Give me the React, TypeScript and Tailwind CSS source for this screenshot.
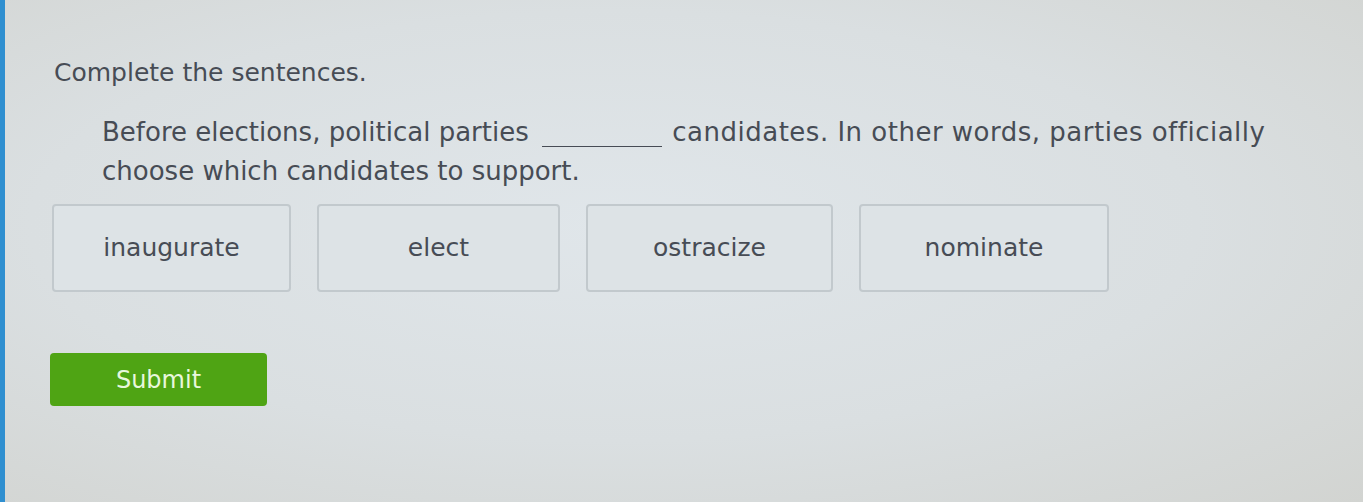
const choices = [
  { label: "inaugurate", w: "w-[239px]" },
  { label: "elect", w: "w-[243px]" },
  { label: "ostracize", w: "w-[247px]" },
  { label: "nominate", w: "w-[250px]" },
]

export default function App() {
  return (
    <div
      className="flex h-[502px] w-[1363px] bg-[radial-gradient(ellipse_at_45%_45%,#e0e6ea_0%,#dadfe1_55%,#d2d4d1_100%)] text-[#474c55]"
      style={{ fontFamily: '"DejaVu Sans", Verdana, sans-serif' }}
    >
      <div className="w-[5px] shrink-0 bg-[#2f8fd0]" />
      <div className="flex flex-col pl-[49px] pt-[58px]">
        <h1 className="text-[25px] leading-[30px] font-normal">Complete the sentences.</h1>

        <p className="mt-[25px] w-[1280px] pl-[48px] text-[26px] leading-[39px]">
          Before elections, political parties{" "}
          <span className="ml-[5px] mr-[2px] inline-block w-[120px] border-b border-[#474c55] align-[-6px]" />{" "}
          <span className="tracking-[0.5px]">candidates. In other words, parties officially</span>
          <br />
          choose which candidates to support.
        </p>

        <div className="mt-[13px] -ml-[2px] flex gap-[26px]">
          {choices.map((c) => (
            <button
              key={c.label}
              className={`flex h-[88px] ${c.w} items-center justify-center rounded-[4px] border-2 border-[#c2c9cd] bg-[#dde3e6] text-[25px]`}
            >
              {c.label}
            </button>
          ))}
        </div>

        <button className="mt-[61px] -ml-[4px] h-[53px] w-[217px] rounded-[4px] bg-[#4fa414] text-[24px] text-[#e8f7dc]">
          Submit
        </button>
      </div>
    </div>
  )
}
